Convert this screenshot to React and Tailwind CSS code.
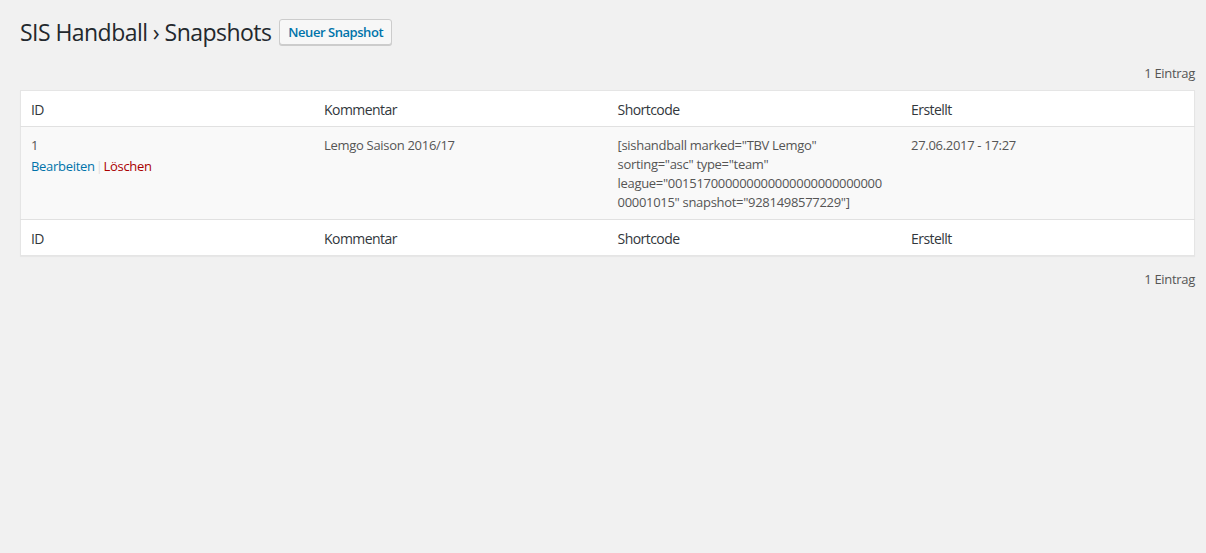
import React from 'react';

const font = { fontFamily: '"Open Sans", "Noto Sans", "Liberation Sans", sans-serif' };

function HeadRow({ top }) {
  const cols = ['ID', 'Kommentar', 'Shortcode', 'Erstellt'];
  return (
    <tr className={top ? 'border-b border-[#e1e1e1]' : 'border-t border-[#e1e1e1]'}>
      {cols.map((c) => (
        <th
          key={c}
          className="px-[10px] pt-[9px] pb-[7px] text-left align-top text-[14px] font-normal leading-[19px] tracking-[-0.55px] text-[#32373c]"
        >
          {c}
        </th>
      ))}
    </tr>
  );
}

export default function App() {
  return (
    <div
      className="min-h-screen bg-[#f1f1f1] pl-[20px] pr-[11px] text-[13px] tracking-[-0.3px] text-[#555]"
      style={font}
    >
      {/* Title */}
      <div className="flex items-center pt-[17px]">
        <h1 className="text-[23px] font-normal leading-[30px] tracking-[-0.55px] text-[#23282d]">
          SIS Handball › Snapshots
        </h1>
        <button className="ml-[8px] h-[26px] rounded-[3px] border border-[#ccc] bg-[#f7f7f7] px-[8px] text-[13px] font-semibold leading-[24px] tracking-[-0.45px] text-[#0073aa] shadow-[0_1px_0_#ccc]">
          Neuer Snapshot
        </button>
      </div>

      <div className="flex justify-end pt-[17px] pb-[8px] leading-[18px]">1 Eintrag</div>

      {/* Table */}
      <table className="w-full table-fixed border border-[#e5e5e5] bg-white shadow-[0_1px_1px_rgba(0,0,0,0.04)]">
        <thead>
          <HeadRow top />
        </thead>
        <tbody>
          <tr className="bg-[#f9f9f9] align-top leading-[19px]">
            <td className="px-[10px] pt-[9px] pb-[7px]">
              <div>1</div>
              <div className="pt-[2px]">
                <a className="text-[#0073aa]">Bearbeiten</a>
                <span className="px-[1px] text-[#ddd]">|</span>
                <a className="text-[#a00]">Löschen</a>
              </div>
            </td>
            <td className="px-[10px] pt-[9px] pb-[7px]">Lemgo Saison 2016/17</td>
            <td className="px-[10px] pt-[9px] pb-[7px] whitespace-nowrap">
              <div>[sishandball marked="TBV Lemgo"</div>
              <div>sorting="asc" type="team"</div>
              <div>league="001517000000000000000000000000</div>
              <div>00001015" snapshot="9281498577229"]</div>
            </td>
            <td className="px-[10px] pt-[9px] pb-[7px]">27.06.2017 - 17:27</td>
          </tr>
        </tbody>
        <tfoot>
          <HeadRow />
        </tfoot>
      </table>

      <div className="flex justify-end pt-[14px] leading-[18px]">1 Eintrag</div>
    </div>
  );
}
